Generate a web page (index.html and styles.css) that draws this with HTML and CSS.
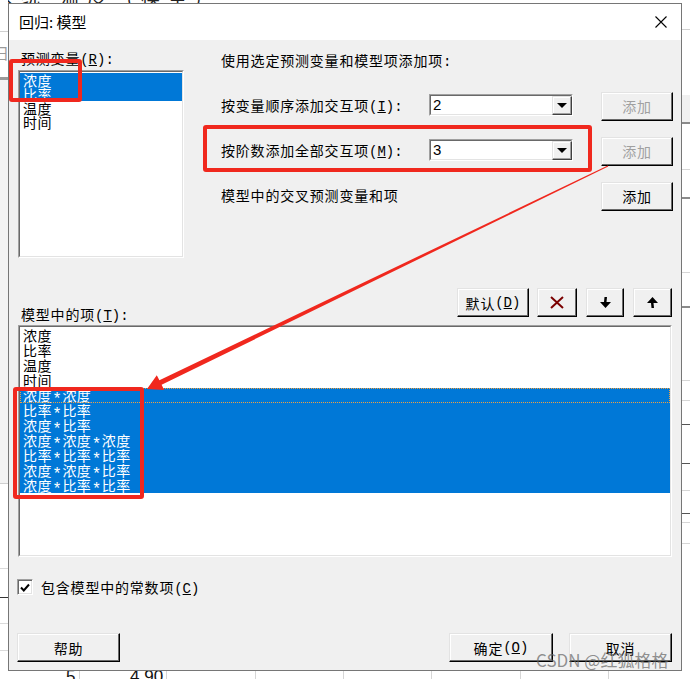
FILE: index.html
```html
<!DOCTYPE html>
<html lang="zh-CN">
<head>
<meta charset="utf-8">
<title>回归: 模型</title>
<link rel="stylesheet" href="styles.css">
</head>
<body>
<div class="desk">
  <div class="bg-top">系统 温度 (模型)</div>
  <div class="strip-left"><span class="bg-ri">日</span></div>
  <div class="strip-right"></div>
  <div class="strip-bottom">
    <span class="cell c1">5</span><span class="cell c2">4.90</span>
  </div>
</div>

<div class="dialog">
  <div class="titlebar">
    <span class="title">回归: 模型</span>
    <svg class="close" width="12" height="12" viewBox="0 0 12 12"><path d="M0.5 0.5 L11.5 11.5 M11.5 0.5 L0.5 11.5" stroke="#000" stroke-width="1.1" fill="none"/></svg>
  </div>
  <div class="content">
    <div class="top">
      <div class="leftcol">
        <div class="lbl">预测变量<span class="hw">(<u>R</u>):</span></div>
        <div class="listbox small">
          <div class="inner">
            <div class="item sel">浓度</div>
            <div class="item sel">比率</div>
            <div class="item">温度</div>
            <div class="item">时间</div>
          </div>
        </div>
      </div>
      <div class="rightcol">
        <div class="intro">使用选定预测变量和模型项添加项<span class="hw">:</span></div>
        <div class="row first">
          <span class="rlabel">按变量顺序添加交互项<span class="hw">(<u>I</u>):</span></span>
          <div class="combo"><div class="cin"><span class="val">2</span><span class="drop"><i class="tri"></i></span></div></div>
          <button class="btn add dis">添加</button>
        </div>
        <div class="row">
          <span class="rlabel">按阶数添加全部交互项<span class="hw">(<u>M</u>):</span></span>
          <div class="combo"><div class="cin"><span class="val">3</span><span class="drop"><i class="tri"></i></span></div></div>
          <button class="btn add dis">添加</button>
        </div>
        <div class="row">
          <span class="rlabel wide">模型中的交叉预测变量和项</span>
          <button class="btn add push">添加</button>
        </div>
      </div>
    </div>

    <div class="mid">
      <span class="lbl2">模型中的项<span class="hw">(<u>T</u>):</span></span>
      <div class="tools">
        <button class="btn b-def">默认<span class="hw">(<u>D</u>)</span></button>
        <button class="btn b-del"><svg width="14" height="13" viewBox="0 0 14 13"><path d="M1 1 L13 12 M13 1 L1 12" stroke="#7a0000" stroke-width="2" fill="none"/></svg></button>
        <button class="btn b-dn"><svg width="11" height="11" viewBox="0 0 11 11"><path d="M4.5 0 H7 L6.5 5 H11 L5.5 11 L0 5 H4 Z" fill="#000"/></svg></button>
        <button class="btn b-up"><svg width="11" height="11" viewBox="0 0 11 11"><path d="M5.5 0 L11 6 H6.5 L7 11 H4.5 L4 6 H0 Z" fill="#000"/></svg></button>
      </div>
    </div>

    <div class="listbox big">
      <div class="inner">
        <div class="item">浓度</div>
        <div class="item">比率</div>
        <div class="item">温度</div>
        <div class="item">时间</div>
        <div class="item sel focus">浓度<span class="ast">*</span>浓度</div>
        <div class="item sel">比率<span class="ast">*</span>比率</div>
        <div class="item sel">浓度<span class="ast">*</span>比率</div>
        <div class="item sel">浓度<span class="ast">*</span>浓度<span class="ast">*</span>浓度</div>
        <div class="item sel">比率<span class="ast">*</span>比率<span class="ast">*</span>比率</div>
        <div class="item sel">浓度<span class="ast">*</span>浓度<span class="ast">*</span>比率</div>
        <div class="item sel">浓度<span class="ast">*</span>比率<span class="ast">*</span>比率</div>
      </div>
    </div>

    <div class="chkrow">
      <span class="chk"><svg width="10" height="9" viewBox="0 0 10 9"><path d="M1 4.5 L3.8 7.5 L9 1.5" stroke="#000" stroke-width="2" fill="none"/></svg></span>
      <span class="chklbl">包含模型中的常数项<span class="hw">(<u>C</u>)</span></span>
    </div>

    <div class="bottom">
      <button class="btn b-help">帮助</button>
      <button class="btn b-ok">确定<span class="hw">(<u>O</u>)</span></button>
      <button class="btn b-cancel">取消</button>
    </div>
  </div>
</div>

<div class="mark m1"></div>
<div class="mark m2"></div>
<div class="mark m3"></div>
<svg class="arrow" width="690" height="679" viewBox="0 0 690 679">
  <polygon points="608.2,166.4 161.6,384.8 164.2,390 147,389 156.8,375.2 159.4,380.2 607.8,165.6" fill="#f0281e"/>
</svg>
<div class="watermark">CSDN @红狐格格</div>
</body>
</html>
```

FILE: styles.css
```css
* { box-sizing: border-box; }
html, body { margin: 0; padding: 0; }
body {
  width: 690px;
  height: 679px;
  position: relative;
  overflow: hidden;
  background: #fff;
  font-family: "Noto Sans CJK SC", "Noto Sans", sans-serif;
  color: #000;
}
u { text-decoration: underline; text-underline-offset: 1px; }
.hw { font-family: "Liberation Mono", "DejaVu Sans Mono", monospace; letter-spacing: 0; line-height: 1; }
.ast {
  font-family: "Liberation Mono", "DejaVu Sans Mono", monospace;
  font-size: 16px; line-height: 0; letter-spacing: 0;
  position: relative; top: 3px;
  padding: 0 0.5px;
}

/* background application behind the dialog */
.desk { position: absolute; inset: 0; }
.bg-top {
  position: absolute; left: -6px; top: -14px;
  font-size: 19px; line-height: 20px; color: #222; white-space: nowrap; letter-spacing: 8px;
}
.strip-left {
  position: absolute; left: 0; top: 0; width: 8px; height: 679px; overflow: hidden;
  background:
    linear-gradient(#d0d0d0, #d0d0d0) 0 31px / 8px 1px no-repeat,
    linear-gradient(#9a9a9a, #9a9a9a) 0 77px / 8px 3px no-repeat,
    linear-gradient(#f3f3f3, #f3f3f3) 0 80px / 8px 403px no-repeat,
    linear-gradient(#cfcfcf, #cfcfcf) 0 483px / 8px 1px no-repeat,
    linear-gradient(#dadada, #dadada) 0 568px / 8px 1px no-repeat,
    linear-gradient(#333, #333) 0 597px / 8px 1px no-repeat,
    linear-gradient(#dadada, #dadada) 0 623px / 8px 1px no-repeat,
    linear-gradient(#dadada, #dadada) 0 650px / 8px 1px no-repeat,
    #fff;
}
.bg-ri { position: absolute; left: -6px; top: 44px; font-size: 15px; line-height: 18px; color: #9a9a9a; }
.strip-right {
  position: absolute; left: 682px; top: 0; width: 8px; height: 679px;
  background:
    linear-gradient(#d0d0d0, #d0d0d0) 0 29px / 8px 1px no-repeat,
    linear-gradient(#f0f0f0, #f0f0f0) 0 95px / 8px 27px no-repeat,
    linear-gradient(#8a8a8a, #8a8a8a) 0 122px / 8px 2px no-repeat,
    linear-gradient(#d6d6d6, #d6d6d6) 0 169px / 8px 1px no-repeat,
    linear-gradient(#8a8a8a, #8a8a8a) 0 197px / 8px 2px no-repeat,
    linear-gradient(#d6d6d6, #d6d6d6) 0 272px / 8px 1px no-repeat,
    linear-gradient(#8a8a8a, #8a8a8a) 0 306px / 8px 2px no-repeat,
    linear-gradient(#d6d6d6, #d6d6d6) 0 380px / 8px 1px no-repeat,
    linear-gradient(#d6d6d6, #d6d6d6) 0 400px / 8px 1px no-repeat,
    linear-gradient(#555, #555) 0 424px / 8px 1px no-repeat,
    linear-gradient(#555, #555) 0 463px / 8px 1px no-repeat,
    linear-gradient(#d6d6d6, #d6d6d6) 0 490px / 8px 1px no-repeat,
    linear-gradient(#555, #555) 0 513px / 8px 1px no-repeat,
    linear-gradient(#d6d6d6, #d6d6d6) 0 522px / 8px 1px no-repeat,
    linear-gradient(#d6d6d6, #d6d6d6) 0 543px / 8px 1px no-repeat,
    #fff;
}
.strip-bottom {
  position: absolute; left: 0; top: 668px; width: 690px; height: 11px;
  background:
    linear-gradient(#d6d6d6, #d6d6d6) 79px 0 / 1px 11px no-repeat,
    linear-gradient(#d6d6d6, #d6d6d6) 166px 0 / 1px 11px no-repeat,
    linear-gradient(#d6d6d6, #d6d6d6) 255px 0 / 1px 11px no-repeat,
    linear-gradient(#d6d6d6, #d6d6d6) 343px 0 / 1px 11px no-repeat,
    linear-gradient(#d6d6d6, #d6d6d6) 431px 0 / 1px 11px no-repeat,
    linear-gradient(#d6d6d6, #d6d6d6) 520px 0 / 1px 11px no-repeat,
    linear-gradient(#d6d6d6, #d6d6d6) 608px 0 / 1px 11px no-repeat,
    #fff;
}
.cell {
  position: absolute; top: 0; font-family: "Liberation Sans", sans-serif;
  font-size: 17px; line-height: 18px; color: #111;
}
.c1 { left: 66px; }
.c2 { left: 130px; }

/* dialog window */
.dialog {
  position: absolute; left: 8px; top: 3px;
  width: 674px; height: 668px;
  border: 1px solid #767676;
  background: #f0f0f0;
  display: flex; flex-direction: column;
}
.titlebar {
  height: 36px; flex: none; background: #fff;
  display: flex; align-items: center; justify-content: space-between;
  padding: 0 14px 0 10px;
}
.title { font-size: 15px; line-height: 18px; }
.close { display: block; }

.content {
  flex: 1;
  display: flex; flex-direction: column;
  padding: 0 8px 0 9px;
  font-size: 14px;
  letter-spacing: 0.8px;
}
.top { display: flex; gap: 37px; height: 218px; flex: none; }
.leftcol { width: 166px; flex: none; }
.lbl { margin-top: 9px; height: 18px; line-height: 18px; padding-left: 3px; }

.listbox {
  background: #fff;
  border: 1px solid;
  border-color: #a0a0a0 #fff #fff #a0a0a0;
}
.listbox .inner {
  height: 100%;
  border: 1px solid;
  border-color: #696969 #e3e3e3 #e3e3e3 #696969;
  padding-top: 1px;
  overflow: hidden;
}
.listbox.small { margin-top: 3px; height: 188px; }
.listbox.small .item { line-height: 14px; height: 14px; }
.item { padding-left: 3px; white-space: nowrap; line-height: 15px; height: 15px; letter-spacing: 0.4px; }
.item.sel { background: #0078d7; color: #fff; }
.item.focus { outline: 1px dotted #f0a040; outline-offset: -1px; }

.rightcol { flex: 1; }
.intro { margin-top: 10px; height: 20px; line-height: 20px; }
.row { display: flex; align-items: center; height: 30px; margin-top: 15px; }
.row.first { margin-top: 21px; }
.rlabel { width: 208px; flex: none; white-space: nowrap; line-height: 18px; margin-top: -2px; }
.rlabel.wide { width: auto; }

.combo {
  width: 144px; height: 22px; flex: none;
  background: #fff;
  border: 1px solid;
  border-color: #a0a0a0 #fff #fff #a0a0a0;
  margin-top: -2px;
}
.cin {
  height: 100%;
  border: 1px solid;
  border-color: #696969 #e3e3e3 #e3e3e3 #696969;
  display: flex; align-items: center;
}
.val { flex: 1; padding-left: 2px; font-family: "Liberation Sans", sans-serif; font-size: 15px; line-height: 18px; }
.drop {
  width: 20px; height: 19px; margin-right: -1px;
  background: #f0f0f0;
  border: 1px solid;
  border-color: #e3e3e3 #404040 #404040 #e3e3e3;
  box-shadow: inset -1px -1px #a0a0a0, inset 1px 1px #fff;
  display: flex; align-items: center; justify-content: center;
}
.tri {
  display: block; width: 0; height: 0;
  border-left: 5px solid transparent;
  border-right: 5px solid transparent;
  border-top: 5px solid #000;
}

.btn {
  font-family: "Noto Sans CJK SC", "Noto Sans", sans-serif;
  font-size: 14px; line-height: 16px; letter-spacing: 0.8px;
  color: #000;
  background: #f0f0f0;
  border: 1px solid;
  border-color: #e3e3e3 #000 #000 #e3e3e3;
  box-shadow: inset -1px -1px #6a6a6a, inset 1px 1px #fff;
  display: flex; align-items: center; justify-content: center;
  padding: 0; margin: 0;
  height: 29px; flex: none;
}
.btn svg { display: block; }
.add { width: 72px; margin-left: 28px; }
.add.push { margin-left: auto; }
.dis { color: #a0a0a0; }

.mid { margin-top: 30px; display: flex; align-items: flex-end; height: 34px; flex: none; }
.lbl2 { padding-left: 3px; height: 16px; line-height: 16px; }
.tools { margin-left: auto; margin-right: 1px; align-self: flex-start; display: flex; }
.b-def { width: 72px; }
.b-del { width: 40px; margin-left: 8px; }
.b-dn { width: 38px; margin-left: 9px; }
.b-up { width: 39px; margin-left: 9px; }

.listbox.big { margin-top: 3px; height: 232px; margin-right: 1px; flex: none; }

.chkrow { margin-top: 22px; margin-left: -1px; display: flex; align-items: center; height: 16px; flex: none; }
.chk {
  width: 16px; height: 16px; flex: none;
  background: #fff;
  border: 1px solid;
  border-color: #a0a0a0 #fff #fff #a0a0a0;
  box-shadow: inset 1px 1px #696969, inset -1px -1px #e3e3e3;
  display: flex; align-items: center; justify-content: center;
}
.chklbl { margin-left: 8px; line-height: 16px; }

.bottom { margin-top: 38px; display: flex; flex: none; }
.b-help { width: 103px; margin-left: -1px; }
.b-ok { width: 104px; margin-left: auto; }
.b-cancel { width: 103px; margin-left: 16px; margin-right: 1px; }

/* annotations over the screenshot */
.mark {
  position: absolute;
  border: 4px solid #f0281e;
  border-radius: 3px;
}
.m1 { left: 9px; top: 59px; width: 73px; height: 43px; }
.m2 { left: 203px; top: 125px; width: 389px; height: 47px; }
.m3 { left: 13px; top: 387px; width: 131px; height: 112px; }
.arrow { position: absolute; left: 0; top: 0; pointer-events: none; }
.watermark {
  position: absolute; left: 536px; top: 650px;
  font-family: "Noto Sans CJK SC", "Noto Sans", sans-serif;
  font-size: 17px; line-height: 19px;
  color: rgba(100, 100, 100, 0.7);
  white-space: nowrap;
}
```
